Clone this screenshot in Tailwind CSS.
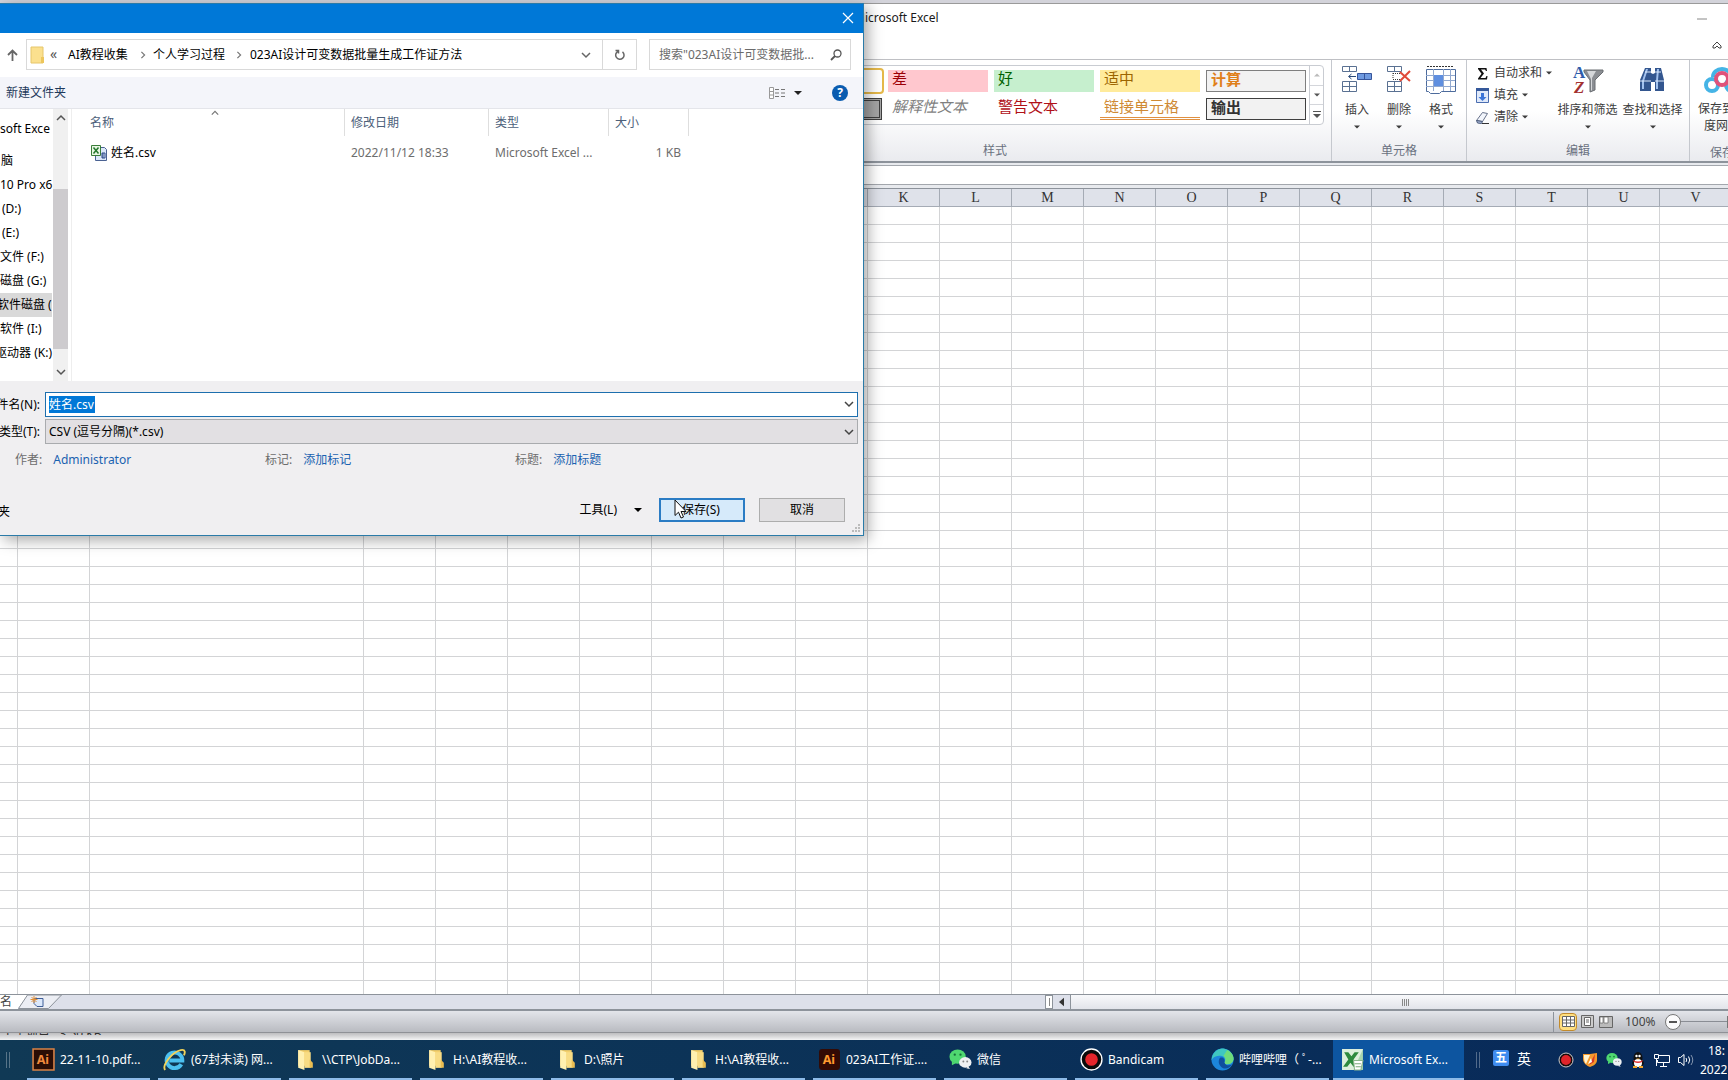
<!DOCTYPE html>
<html lang="zh-CN">
<head>
<meta charset="utf-8">
<title>Microsoft Excel</title>
<script src="https://cdn.jsdelivr.net/npm/@tailwindcss/browser@4"></script>
</head>
<body class="h-screen overflow-hidden relative flex flex-col bg-[#d3d3da] text-xs text-[#1a1a1a] font-['Noto_Sans','Noto_Sans_CJK_SC',sans-serif]">
<svg class="hidden">
  <symbol id="folder" viewBox="0 0 22 22"><path d="M4 2h11v15H4z" fill="#f3cf6b"/><path d="M4 2l6 2v17l-6-2z" fill="#fff0b0"/><path d="M10 4h6v15h-6z" fill="#f8dc84"/><path d="M15 11l3 3v5h-3z" fill="#e9bd52"/></symbol>
  <symbol id="chev" viewBox="0 0 10 10"><path d="M1 3l4 4 4-4" fill="none" stroke="currentColor" stroke-width="1.5"/></symbol>
  <symbol id="tri" viewBox="0 0 8 8"><path d="M0 2h8L4 6z" fill="currentColor"/></symbol>
  <symbol id="wechat" viewBox="0 0 24 24"><ellipse cx="9" cy="9" rx="8.500" ry="7.500" fill="#4fd870"/><path d="M3 14l0 4 4-2z" fill="#4fd870"/><circle cx="6" cy="7" r="1.200" fill="#17703a"/><circle cx="12" cy="7" r="1.200" fill="#17703a"/><ellipse cx="17" cy="15" rx="6.500" ry="5.500" fill="#eef0f2"/><path d="M20 19l2 3-4-1z" fill="#eef0f2"/><circle cx="15" cy="14" r="1" fill="#888"/><circle cx="19" cy="14" r="1" fill="#888"/></symbol>
</svg>

<main class="mt-[3px] flex-1 min-h-0 flex flex-col border-t border-[#9a9a9a] bg-white">
  <header class="h-[55px] shrink-0 flex justify-between pl-[854px] pr-[6px]">
    <h1 class="pt-1.5 leading-4">Microsoft Excel</h1>
    <div class="flex flex-col items-end">
      <button aria-label="最小化" class="w-[10px] h-[30px] mr-[15px]"><svg class="w-[10px] h-[10px]" viewBox="0 0 10 10"><path d="M0 5h10" stroke="#888"/></svg></button>
      <button aria-label="折叠功能区" class="flex mt-1.5"><svg class="w-2.5 h-2.5" viewBox="0 0 10 10"><path d="M1 6l4-4 4 4v2H7L5 6 3 8H1z" fill="#fff" stroke="#444"/></svg></button>
    </div>
  </header>

  <nav aria-label="功能区" class="h-[104px] shrink-0 flex pl-[659px] border-t border-[#bfc0c4] border-b-2 border-b-[#8d939b] bg-linear-to-b from-white from-50% to-[#eaebef] text-[#3c3c3c] whitespace-nowrap">
    <section class="w-[673px] shrink-0 flex flex-col items-end border-r border-[#c5c8ce] pt-[5px] pr-[7px]">
      <div class="flex h-[60px] border border-[#c9ccd2] bg-white rounded-sm font-['Noto_Sans_CJK_SC',sans-serif] text-[15px] leading-4">
        <div class="grid grid-cols-[repeat(5,100px)] gap-x-1.5 gap-y-1.5 p-1 pr-[3px] content-start [&>button]:flex [&>button]:items-start">
          <button class="h-[22px] bg-white outline-2 outline-[#e6b94a] rounded-xs"></button>
          <button class="h-[22px] bg-[#ffc7ce] text-[#9c0006] px-1">差</button>
          <button class="h-[22px] bg-[#c6efce] text-[#006100] px-1">好</button>
          <button class="h-[22px] bg-[#ffeb9c] text-[#9c6500] px-1">适中</button>
          <button class="h-[22px] bg-[#f2f2f2] text-[#e0801a] px-1 border border-[#7f7f7f] font-bold">计算</button>
          <button class="h-[22px] bg-[#a5a5a5] border-3 border-double border-[#3f3f3f]"></button>
          <button class="h-[22px] text-[#7f7f7f] px-1 italic">解释性文本</button>
          <button class="h-[22px] text-[#b01018] px-1">警告文本</button>
          <button class="h-[22px] text-[#cf8a35] px-1 border-b-3 border-double border-[#e09040]">链接单元格</button>
          <button class="h-[22px] bg-[#f2f2f2] text-[#333] px-1 border border-[#3f3f3f] font-bold">输出</button>
        </div>
        <div class="w-[14px] flex flex-col border-l border-[#c9ccd2] text-[#555]">
          <button aria-label="向上" class="flex-1 flex items-center justify-center text-[#bbb]"><svg class="size-1.5 rotate-180"><use href="#tri"/></svg></button>
          <button aria-label="向下" class="flex-1 flex items-center justify-center border-y border-[#d4d6db]"><svg class="size-1.5"><use href="#tri"/></svg></button>
          <button aria-label="其他" class="flex-1 flex items-center justify-center"><svg class="w-2 h-2" viewBox="0 0 8 8"><path d="M0 .5h8" stroke="currentColor"/><path d="M0 3h8L4 7z" fill="currentColor"/></svg></button>
        </div>
      </div>
      <h2 class="mt-[18px] mr-[317px] leading-4 text-[#6a7180]">样式</h2>
    </section>

    <section class="w-[135px] shrink-0 flex flex-col items-center border-r border-[#c5c8ce] pt-1 text-center">
      <div class="flex">
        <button class="w-[42px] flex flex-col items-center">
          <svg class="w-8 h-8" viewBox="0 0 32 32"><g fill="#fff" stroke="#5a7192"><path d="M1.500 2.500h14v5h-14zM8.500 2.500v5M1.500 17.500h14v10h-14zM8.500 17.500v10M1.500 22.500h14"/></g><path d="M16.500 9.500h14v6h-14zM23.500 9.500v6" fill="#6f9ae0" stroke="#37559a"/><path d="M8 12.500h7M10.500 10l-3 2.500 3 2.500" fill="none" stroke="#2a4a7a"/></svg>
          <span class="mt-1.5 leading-4">插入</span><svg class="size-1.5 mt-1.5"><use href="#tri"/></svg></button>
        <button class="w-[42px] flex flex-col items-center">
          <svg class="w-8 h-8" viewBox="0 0 32 32"><g fill="#fff" stroke="#5a7192"><path d="M4.500 2.500h14v5h-14zM11.500 2.500v5M4.500 17.500h14v10h-14zM11.500 17.500v10M4.500 22.500h14"/></g><path d="M10 9.500h8M10 15.500h8M10 9v6" stroke="#333" stroke-dasharray="1 1"/><path d="M17 8l10 9M27 7L17 17" stroke="#e04a3a" stroke-width="2"/></svg>
          <span class="mt-1.5 leading-4">删除</span><svg class="size-1.5 mt-1.5"><use href="#tri"/></svg></button>
        <button class="w-[42px] flex flex-col items-center">
          <svg class="w-8 h-8" viewBox="0 0 32 32"><path d="M2 2.500h26" stroke="#333" stroke-dasharray="2 1"/><path d="M1.500 5.500h29v22h-14l-2 2h-9l-2-2h-2z" fill="#fff" stroke="#4d6b9c"/><path d="M1 11.500h29M1 16.500h29M1 22.500h29M8.500 5v22M18.500 5v22M25.500 5v22" stroke="#92a9d0"/><path d="M9 11h9v11H9z" fill="#5f8fe0"/></svg>
          <span class="mt-1.5 leading-4">格式</span><svg class="size-1.5 mt-1.5"><use href="#tri"/></svg></button>
      </div>
      <h2 class="mt-[13px] leading-4 text-[#6a7180]">单元格</h2>
    </section>

    <section class="w-[223px] shrink-0 flex flex-col border-r border-[#c5c8ce] pt-1">
      <div class="flex pl-[9px] h-[66px]">
        <div class="w-[77px] flex flex-col -mt-0.5">
          <button class="h-[22px] flex items-center"><svg class="w-[13px] h-[13px] mr-[5px]" viewBox="0 0 13 13"><path d="M2 1h8.500l.5 3h-1L9 2.500H5L8 6.500 4.500 11H9.500L10.500 9h1L11 12.500H2v-1L5.500 6.700 2 2z" fill="#111"/></svg>自动求和<svg class="size-1.5 ml-1"><use href="#tri"/></svg></button>
          <button class="h-[22px] flex items-center"><svg class="w-[13px] h-[15px] mr-[5px]" viewBox="0 0 13 15"><path d="M.5.500h12v14H.5z" fill="#dfe9fa" stroke="#4a6db0"/><path d="M0 0h13v3H0z" fill="#35589a"/><path d="M5 5h3v4h2.500l-4 4-4-4H5z" fill="#3a74d8"/></svg>填充<svg class="size-1.5 ml-1"><use href="#tri"/></svg></button>
          <button class="h-[22px] flex items-center"><svg class="w-[13px] h-[13px] mr-[5px]" viewBox="0 0 13 13"><path d="M.5 9.500l6-8 5 1-5 8z" fill="#f2f5fb" stroke="#67728a"/><path d="M.5 9.500l6 1-1 2-4-.5z" fill="#a9b9d9" stroke="#4b5a7a"/><path d="M6 12.500h7" stroke="#333"/></svg>清除<svg class="size-1.5 ml-1"><use href="#tri"/></svg></button>
        </div>
        <button class="w-[65px] flex flex-col items-center ml-0.5">
          <svg class="w-8 h-8" viewBox="0 0 32 32"><path d="M12 6h19v2l-8 8v10l-5 2V16l-6-8z" fill="#8b8e93" stroke="#6b6e73"/><path d="M15 7h9l-4 7v12l-1 1V15z" fill="#d5d7da"/><text x="1" y="14" font-family="Liberation Serif" font-weight="700" font-size="17" fill="#2f5caa">A</text><text x="2" y="29" font-family="Liberation Serif" font-weight="700" font-style="italic" font-size="17" fill="#a33131">Z</text></svg>
          <span class="mt-1.5 leading-4">排序和筛选</span><svg class="size-1.5 mt-1.5"><use href="#tri"/></svg></button>
        <button class="w-[65px] flex flex-col items-center">
          <svg class="w-8 h-8" viewBox="0 0 32 32"><path d="M8 4h6v5l2 1 2-1V4h6l3 12v11h-9v-9h-4v9H3V16z" fill="#33568f"/><path d="M9 5h2L7 17v8H5v-8zM20 5h2l-1 11v9h-2v-8z" fill="#a3c2ee"/><path d="M3 17h11M18 17h9M8 8h6M18 8h6" stroke="#dbe7fa"/></svg>
          <span class="mt-1.5 leading-4">查找和选择</span><svg class="size-1.5 mt-1.5"><use href="#tri"/></svg></button>
      </div>
      <h2 class="mt-[13px] leading-4 text-center text-[#6a7180]">编辑</h2>
    </section>

    <section class="shrink-0 w-[62px] flex flex-col items-center pt-1">
      <button class="flex flex-col items-center w-[50px] ml-0.5">
        <svg class="w-10 h-8" viewBox="0 0 40 32"><g fill="none" stroke-width="4"><circle cx="10" cy="21" r="6" stroke="#45b4e6"/><circle cx="30" cy="21" r="6" stroke="#45b4e6"/><path d="M11 13a9 8 0 0 1 18 0" stroke="#45b4e6"/><circle cx="20" cy="15" r="6" stroke="#e0527a"/></g></svg>
        <span class="mt-1 leading-[17px]">保存到百<br>度网盘</span></button>
      <h2 class="mt-[11px] ml-0.5 leading-4 text-[#6a7180]">保存</h2>
    </section>
  </nav>

  <div class="h-[26px] shrink-0 bg-[#e8eaee] pt-0.5 pb-[3px] border-b border-[#8d939b]">
    <input aria-label="编辑栏" class="block w-full h-[20px] bg-white border-y border-[#a3a7ad] outline-none">
  </div>

  <div class="flex-1 min-h-0 overflow-hidden">
    <table id="grid" class="table-fixed w-[1804px] border-separate border-spacing-0">
      <colgroup><col class="w-[18px]"><col class="w-[72px]"><col class="w-[274px]"></colgroup>
      <thead><tr></tr></thead>
      <tbody></tbody>
    </table>
  </div>

  <div class="h-[17px] shrink-0 flex bg-[#dde0ea] border-t border-b-2 border-[#8d939b] overflow-hidden">
    <button class="w-[18px] bg-white text-[#444] leading-[14px] text-left">名</button>
    <button aria-label="插入工作表" class="w-[46px]"><svg class="w-[46px] h-[14px]" viewBox="0 0 46 14"><path d="M0 0H10L0 13z" fill="#fff"/><path d="M9.500 0L.5 13.500h30L43.500 0z" fill="#eceef4" stroke="#8d939b"/><path d="M16 3.500h9v8h-6l-3-3z" fill="#dbe8fb" stroke="#3f5e96"/><path d="M16 1v7M12.500 4.500h7M13.500 2l5 5M18.500 2l-5 5" stroke="#e3923a"/></svg></button>
    <div class="w-[981px] shrink-0"></div>
    <div class="w-2 shrink-0 bg-white border border-[#8d939b] flex justify-center py-0.5"><span class="w-px bg-[#888]"></span></div>
    <button aria-label="向左滚动" class="w-[17px] shrink-0 flex items-center justify-center text-[#333]"><svg class="w-[5px] h-2.5" viewBox="0 0 6 10"><path d="M6 0v10L0 5z" fill="currentColor"/></svg></button>
    <div class="flex-1 bg-linear-to-b from-[#f8f9fb] to-[#e2e4ea] border-l border-[#8d939b] flex items-center pl-[331px] gap-px">
      <i class="w-px h-[7px] bg-[#888]"></i><i class="w-px h-[7px] bg-[#888]"></i><i class="w-px h-[7px] bg-[#888]"></i><i class="w-px h-[7px] bg-[#888]"></i>
    </div>
  </div>

  <footer class="h-[22px] shrink-0 flex items-center justify-end bg-linear-to-b from-[#e3e5ea] to-[#b9bbc1] border-b border-[#8f9196] text-[#444]">
    <div class="h-5 border-l border-[#8d939b] pl-[5px] flex items-center gap-px">
      <button aria-label="普通" class="size-[18px] rounded-sm border border-[#c28a2c] bg-[#ffdf80] flex items-center justify-center"><svg class="w-[13px] h-[11px]" viewBox="0 0 13 11"><path d="M.5.500h12v10H.5zM.5 4h12M.5 7h12M4.500 0v11M8.500 0v11" fill="#fff" stroke="#666"/></svg></button>
      <button aria-label="页面布局" class="size-[18px] flex items-center justify-center"><svg class="size-[13px]" viewBox="0 0 13 13"><path d="M.5.500h12v12H.5z" fill="#ccc" stroke="#666"/><path d="M3.500 2.500h6v8h-6zM5 5h3M5 7h3" fill="#fff" stroke="#666"/></svg></button>
      <button aria-label="分页预览" class="size-[18px] flex items-center justify-center"><svg class="w-[14px] h-[12px]" viewBox="0 0 14 12"><path d="M.5.500h13v11H.5z" fill="#bbb" stroke="#666"/><path d="M1 1h3v6H1zM5 1h4v6H5z" fill="#fff" stroke="#666" stroke-width=".7"/></svg></button>
    </div>
    <span class="ml-2.5 w-[36px]">100%</span>
    <button aria-label="缩小" class="ml-1 flex"><svg class="size-4" viewBox="0 0 16 16"><circle cx="8" cy="8" r="7.500" fill="#fbfbfc" stroke="#777"/><path d="M4 8h8" stroke="#555" stroke-width="2"/></svg></button>
    <div class="w-[46px] h-px bg-[#8a8d94]"></div><div class="w-px h-3 bg-[#777]"></div>
  </footer>
</main>

<div class="h-[7px] shrink-0 overflow-hidden bg-linear-to-b from-[#bdbdbf] to-[#f4f4f5] flex items-start">
  <p class="h-[2px] overflow-hidden flex flex-col justify-center pl-1 leading-4 text-[#333] whitespace-pre"><span>1 个项目   3.50 KB</span></p>
</div>

<footer class="h-10 shrink-0 flex bg-linear-to-r from-[#103955] to-[#08295a] text-white">
  <div class="w-[23px] shrink-0 flex items-center pl-1.5 gap-0.5"><i class="w-px h-4 bg-white/30"></i><i class="w-px h-4 bg-white/30"></i></div>
  <nav aria-label="任务栏" class="flex whitespace-nowrap [&>button]:w-[131px] [&>button]:px-1 [&>button]:shrink-0 [&_span]:flex [&_span]:h-10 [&_span]:items-center [&_span]:gap-[5px] [&_span]:pl-[5px] [&_span]:pt-px [&_span]:border-b-2 [&_span]:border-[#8ebbe8] [&_svg]:size-[23px] [&_svg]:shrink-0">
    <button><span><svg viewBox="0 0 22 22"><path d="M1 1h20v20H1z" fill="#2a0d05" stroke="#d98246" stroke-width="1.500"/><text x="4.500" y="15" font-family="Noto Sans" font-weight="700" font-size="12" fill="#f08a3c">Ai</text></svg>22-11-10.pdf...</span></button>
    <button><span><svg viewBox="0 0 22 22"><path d="M17.500 15.500A7.500 7.500 0 1 1 18.500 12H6" fill="none" stroke="#4cc0f0" stroke-width="3.800"/><path d="M2 21C-1 17 8 4 17 2c5-1 4 3 3 5" fill="none" stroke="#f2d35a" stroke-width="1.800"/></svg>(67封未读) 网...</span></button>
    <button><span><svg><use href="#folder"/></svg>\\CTP\JobDa...</span></button>
    <button><span><svg><use href="#folder"/></svg>H:\AI教程收...</span></button>
    <button><span><svg><use href="#folder"/></svg>D:\照片</span></button>
    <button><span><svg><use href="#folder"/></svg>H:\AI教程收...</span></button>
    <button><span><svg viewBox="0 0 22 22"><rect x="1" y="1" width="20" height="20" rx="3" fill="#330a04"/><text x="4.500" y="15.500" font-family="Noto Sans" font-weight="700" font-size="12" fill="#ff9a2e">Ai</text></svg>023AI工作证....</span></button>
    <button><span><svg><use href="#wechat"/></svg>微信</span></button>
    <button><span><svg viewBox="0 0 22 22"><circle cx="11" cy="11" r="10" fill="#0a0a0a" stroke="#fff" stroke-width="1.300"/><circle cx="11" cy="11" r="6" fill="#e5252b"/></svg>Bandicam</span></button>
    <button><span><svg viewBox="0 0 24 24"><circle cx="12" cy="12" r="11.500" fill="#1c86dc"/><path d="M1 10C3 2 10 0 14 .7 21 2 24 8 23.500 12c-.5 3-3 5-6.500 5-2 0-3-1-3-2 2-3 0-7-4-7-4 0-8 1-9.500 5z" fill="#3fc7c0"/><path d="M17 2c5 3 7 7 6.500 10-.5 3-3 5-6.500 5-2 0-3-1-3-2 2-3 1-5-1-7z" fill="#6fdc7a"/><path d="M14 15c1 3 5 4 8 2-3 5-9 6-12 2-3-3-2-8 0-9 3-1 5 2 4 5z" fill="#0e4f9e"/></svg>哔哩哔哩（ ﾟ-...</span></button>
    <button class="bg-[#0d55a0] ![padding:0]"><span class="!pl-2"><svg viewBox="0 0 22 22"><path d="M1 1h20v20H1z" fill="#a9d6ae"/><path d="M1 1h20l-9 20H1z" fill="#dcefdc"/><path d="M3 4h4l3 4 3-4h4l-5 7 4 7h-4l-3-4-3 4H2l5-7z" fill="#2d8a3e"/><path d="M12 12h9l-2 9h-6z" fill="#fff" stroke="#8bb58b"/><path d="M13 15h6M14 18h5" stroke="#7aa87a"/></svg>Microsoft Ex...</span></button>
  </nav>
  <div class="flex flex-1 shrink-0 items-center ml-3">
    <i class="w-px h-4 bg-white/30 mr-0.5"></i><i class="w-px h-4 bg-white/30"></i>
    <button class="ml-[13px] size-4 mb-1 rounded-xs bg-[#3f8cf0] font-bold leading-4 text-center">五</button>
    <button class="ml-2 w-[14px] text-sm mb-0.5">英</button>
    <svg class="ml-[27px] size-4" viewBox="0 0 16 16"><circle cx="8" cy="8" r="7" fill="#1a0a0a" stroke="#ccc"/><circle cx="8" cy="8" r="5" fill="#e0242a"/></svg>
    <svg class="ml-2 size-4" viewBox="0 0 16 16"><path d="M1 2l7 0 7-1v7c0 4-4 6-7 7-3-1-7-4-7-8z" fill="#f59a2c"/><path d="M2 3h6l-4 9C2 10 2 7 2 3z" fill="#fff3d0"/><path d="M13 2L7 13l5-3z" fill="#d83a24"/><path d="M9 6l-3 6 4-2z" fill="#fff"/></svg>
    <svg class="ml-2 size-4"><use href="#wechat"/></svg>
    <svg class="ml-2 size-4" viewBox="0 0 16 16"><ellipse cx="8" cy="6" rx="4.500" ry="6" fill="#111"/><ellipse cx="8" cy="11" rx="6" ry="4" fill="#111"/><ellipse cx="8" cy="11" rx="4" ry="4" fill="#fff"/><path d="M3 8q5 3 10 0l-1 2q-4 2-8 0z" fill="#e03030"/><circle cx="6.500" cy="4" r="1.200" fill="#fff"/><circle cx="9.500" cy="4" r="1.200" fill="#fff"/><path d="M6 6.500h4l-2 1zM3 14h4v2H3zM9 14h4v2H9z" fill="#f2a52c"/></svg>
    <svg class="ml-2 size-4" viewBox="0 0 16 16" fill="none" stroke="#fff"><path d="M5 3.500h10.500v7H3.500V8M9.500 11v3M6 14.500h7M.5 2.500h4v4h-4zM2.500 7v7"/></svg>
    <svg class="ml-2 w-4 h-4" viewBox="0 0 16 16" fill="none" stroke="#fff"><path d="M.5 5.500h2l3.500-3v11l-3.500-3h-2z"/><path d="M8 6q1.500 2 0 4M10.500 4.500q2.500 3.500 0 7" /><path d="M13 3q3.500 5 0 10" opacity=".5"/></svg>
    <time class="ml-1.5 leading-[19px] whitespace-nowrap overflow-hidden"><span class="pl-2">18:</span><br>2022</time>
  </div>
</footer>

<div role="dialog" aria-label="另存为" class="absolute left-0 top-[3px] w-1/2 h-[533px] flex flex-col bg-[#f0eff1] border-t border-r border-b border-[#2b7ba8] shadow-[4px_4px_14px_rgba(0,0,0,0.35)]">
  <div class="h-[29px] shrink-0 bg-[#0078d7] flex justify-end items-center pr-[9px] pb-0.5">
    <button aria-label="关闭" class="flex"><svg class="size-3" viewBox="0 0 12 12"><path d="M1 1l10 10M11 1L1 11" stroke="#fff" stroke-width="1.200"/></svg></button>
  </div>
  <div class="h-[44px] shrink-0 bg-white flex items-center pl-[7px] pr-3 pb-px">
    <button aria-label="上移" class="flex mr-2"><svg class="w-[11px] h-3" viewBox="0 0 11 12"><path d="M5.500 12V1.500M1 6l4.500-4.500L10 6" fill="none" stroke="#666" stroke-width="1.800"/></svg></button>
    <div class="h-[31px] flex-1 border border-[#d9d9d9] flex items-center text-black whitespace-nowrap">
      <svg class="w-[21px] h-[18px]" viewBox="0 0 21 18"><path d="M4 1h12v16H4z" fill="#fbe08e"/><path d="M4 1h12v16H4z" fill="none" stroke="#e6c66a"/><path d="M14 11h3v6h-3z" fill="#edc65c"/></svg>
      <span class="w-5 pl-0.5 pb-0.5 text-sm text-[#555]">«</span>
      <a href="#" class="w-[71px]">AI教程收集</a><svg class="size-2 mr-[6px] -rotate-90 text-[#777]"><use href="#chev"/></svg>
      <a href="#" class="w-[82px]">个人学习过程</a><svg class="size-2 mr-[7px] -rotate-90 text-[#777]"><use href="#chev"/></svg>
      <a href="#" class="flex-1">023AI设计可变数据批量生成工作证方法</a>
      <button aria-label="以前的位置" class="mr-[11px] text-[#666]"><svg class="size-2.5"><use href="#chev"/></svg></button>
      <button aria-label="刷新" class="w-[34px] h-full border-l border-[#d9d9d9] flex items-center justify-center"><svg class="size-3" viewBox="0 0 12 12"><path d="M8.500 2.800a4.200 4.200 0 1 1-4.500-.5M1.500 1.500h3v3" fill="none" stroke="#666" stroke-width="1.500"/></svg></button>
    </div>
    <label class="ml-3 w-[202px] h-[31px] border border-[#d9d9d9] flex items-center pl-[9px] pr-2">
      <input aria-label="搜索" placeholder='搜索"023AI设计可变数据批...' class="flex-1 min-w-0 outline-none placeholder:text-[#6b6b6b]">
      <svg class="size-3" viewBox="0 0 12 12"><circle cx="7.500" cy="4.500" r="3.500" fill="none" stroke="#555" stroke-width="1.300"/><path d="M5 7L1 11" stroke="#555" stroke-width="1.800"/></svg>
    </label>
  </div>
  <div class="h-[32px] shrink-0 bg-[#f4f5fa] border-b border-[#e4e5ea] flex items-center pl-1.5 pr-[15px]">
    <button class="text-[#1e395b]">新建文件夹</button>
    <button aria-label="更改视图" class="ml-auto flex items-center gap-[9px] mr-[30px]"><svg class="w-4 h-3" viewBox="0 0 16 12"><path d="M.5.500h4v11h-4zM.5 4.500h4M.5 8h4" fill="#fff" stroke="#999"/><path d="M6 2.500h4M6 6h4M6 9.500h4M12 2.500h4M12 6h4M12 9.500h4" stroke="#777"/></svg><svg class="size-2 text-[#222]"><use href="#tri"/></svg></button>
    <button aria-label="帮助" class="size-4 rounded-full bg-[#0a5cb0] text-white font-bold leading-4">?</button>
  </div>
  <div class="h-[272px] shrink-0 flex bg-white text-black">
    <ul class="w-[53px] shrink-0 overflow-hidden pt-2 pr-px whitespace-nowrap leading-6 [&>li]:h-6">
      <li class="mb-2">soft Exce</li>
      <li class="pl-px">脑</li>
      <li>10 Pro x6</li>
      <li class="pl-0.5">(D:)</li>
      <li class="pl-0.5">(E:)</li>
      <li>文件 (F:)</li>
      <li>磁盘 (G:)</li>
      <li class="bg-[#d9d9d9] -indent-[3px]">软件磁盘 (</li>
      <li>软件 (I:)</li>
      <li class="flex justify-end"><span>驱动器 (K:)</span></li>
    </ul>
    <div class="w-[15px] shrink-0 bg-[#f0f0f0] flex flex-col items-center text-[#555] py-1">
      <svg class="size-2.5 rotate-180"><use href="#chev" /></svg>
      <div class="mt-[66px] w-full h-[160px] bg-[#cdcbce]"></div>
      <svg class="mt-auto size-2.5"><use href="#chev"/></svg>
    </div>
    <div class="flex-1 ml-[3px] border-l border-[#eee] relative">
      <svg class="absolute left-[139px] top-0 size-2 rotate-180 text-[#777]"><use href="#chev"/></svg>
      <table class="table-fixed w-[617px] text-left border-separate border-spacing-0">
        <colgroup><col class="w-[273px]"><col class="w-[144px]"><col class="w-[120px]"><col class="w-[80px]"></colgroup>
        <thead class="text-[#4c607a] [&_th]:font-normal [&_th]:h-[27px] [&_th]:border-r [&_th]:border-[#dedede] [&_th]:pl-1.5">
          <tr><th class="!pl-[18px]">名称</th><th>修改日期</th><th>类型</th><th>大小</th></tr>
        </thead>
        <tbody class="text-[#6d6d6d] [&_td]:h-[34px] [&_td]:pl-1.5 whitespace-nowrap">
          <tr><td class="!pl-[19px] text-black"><span class="flex items-center gap-1"><svg class="size-4" viewBox="0 0 16 16"><path d="M4.500 2.500h9l2 2v11h-11z" fill="#dce8fa" stroke="#4a6292"/><path d="M.5.500h9v10h-9z" fill="#e9f7e4" stroke="#3b7d3a"/><path d="M2.500 2.500l5 6M7.500 2.500l-5 6" stroke="#23772c" stroke-width="1.500"/><path d="M11 8h3v5h-3zM12 8v5" fill="none" stroke="#2a4888"/></svg>姓名.csv</span></td><td>2022/11/12 18:33</td><td>Microsoft Excel ...</td><td class="text-right pr-2">1 KB</td></tr>
        </tbody>
      </table>
    </div>
  </div>
  <form class="flex-1 flex flex-col pt-[11px] pr-[5px] text-black">
    <div class="flex items-center relative">
      <label for="fn" class="w-[45px] shrink-0 flex justify-end pr-[5px] whitespace-nowrap">件名(N):</label>
      <div class="flex-1 h-[25px] border border-[#1d6fae] bg-white flex items-center pl-[3px] pb-px">
        <input id="fn" value="姓名.csv" class="w-[46px] h-[17px] bg-[#0078d7] text-white outline-none leading-4">
        <svg class="ml-auto mr-[3px] size-2.5 text-[#444]"><use href="#chev"/></svg>
      </div>
    </div>
    <div class="flex items-center relative mt-0.5">
      <label for="ft" class="w-[45px] shrink-0 flex justify-end pr-[5px] whitespace-nowrap">类型(T):</label>
      <select id="ft" class="flex-1 h-[25px] appearance-none border border-[#a9abae] bg-[#e2e0e3] pl-[3px] outline-none"><option>CSV (逗号分隔)(*.csv)</option></select>
      <svg class="absolute right-1 top-2 size-2.5 text-[#444] pointer-events-none"><use href="#chev"/></svg>
    </div>
    <div class="mt-2 flex pl-[15px] leading-4 text-[#6d6d6d] [&>p]:w-[250px] [&_a]:text-[#1a62b0] [&_a]:ml-[11px]">
      <p>作者:<a href="#">Administrator</a></p><p>标记:<a href="#">添加标记</a></p><p>标题:<a href="#">添加标题</a></p>
    </div>
    <div class="mt-[30px] flex items-center pr-[13px]">
      <button type="button" class="-ml-0.5 mr-auto pt-1">夹</button>
      <button type="button" class="flex items-center gap-[17px] mr-[17px]">工具(L)<svg class="size-2"><use href="#tri"/></svg></button>
      <button type="button" class="w-[86px] h-6 border-2 border-[#2b7cc4] bg-[#d6eafa] pr-0.5">保存(S)</button>
      <button type="button" class="ml-3.5 w-[86px] h-6 border border-[#adadad] bg-[#e1e0e2]">取消</button>
    </div>
  </form>
  <svg class="absolute right-0.5 bottom-0.5 size-2.5" viewBox="0 0 10 10"><path d="M7 1h2v2H7zM4 4h2v2H4zM7 4h2v2H7zM1 7h2v2H1zM4 7h2v2H4zM7 7h2v2H7z" fill="#bbb"/></svg>
</div>

<svg class="absolute left-[674px] top-[499px] w-[13px] h-[20px]" viewBox="0 0 13 20"><path d="M1 1v15.500l3.500-3.300L7 19l2.500-1-2.500-5.500h5z" fill="#fff" stroke="#111"/></svg>

<script>
const letters = 'ABCDEFGHIJKLMNOPQRSTUVW'.split('');
const head = document.querySelector('#grid thead tr');
const body = document.querySelector('#grid tbody');
for (const l of letters) {
  const th = document.createElement('th');
  th.className = "h-[18px] p-0 bg-[#dfe2ea] border-r border-b border-[#a5abb5] font-normal text-sm leading-[17px] text-[#333] font-['Liberation_Serif',serif]";
  th.textContent = l;
  head.append(th);
}
for (let r = 0; r < 60; r++) {
  const tr = document.createElement('tr');
  for (const l of letters) {
    const td = document.createElement('td');
    td.className = 'h-[18px] p-0 border-r border-b border-[#d3d4d6]';
    tr.append(td);
  }
  body.append(tr);
}
</script>
</body>
</html>
